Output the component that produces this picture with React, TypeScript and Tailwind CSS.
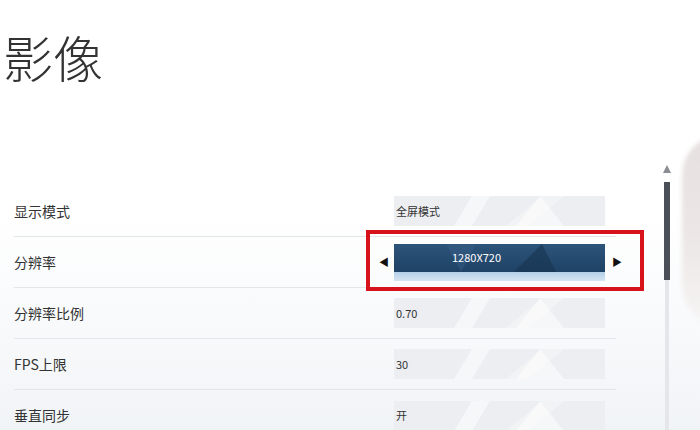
const rows = [
  { label: "显示模式", value: "全屏模式" },
  { label: "分辨率", value: "1280X720", active: true },
  { label: "分辨率比例", value: "0.70" },
  { label: "FPS上限", value: "30" },
  { label: "垂直同步", value: "开" },
];

const BoxPattern = () => (
  <svg className="absolute inset-0 h-full w-full" viewBox="0 0 211 30" preserveAspectRatio="none">
    <polygon points="60,30 78,0 96,0 78,30" fill="#ffffff" opacity="0.5" />
    <polygon points="112,30 148,0 170,0 134,30" fill="#ffffff" opacity="0.3" />
    <polygon points="122,30 146,0 170,30" fill="#ffffff" opacity="0.5" />
  </svg>
);

const ActivePattern = () => (
  <svg className="absolute inset-0 h-full w-full" viewBox="0 0 211 28" preserveAspectRatio="none">
    <polygon points="52,0 82,0 67,28" fill="#3a6089" opacity="0.45" />
    <polygon points="120,28 148,0 162,28" fill="#17344f" opacity="0.6" />
  </svg>
);

const App = () => {
  return (
    <div className="relative w-[700px] h-[430px] overflow-hidden bg-gradient-to-b from-white via-white to-[#f1f4f7] font-['Noto_Sans_CJK_SC',sans-serif] text-[#333]">
      {/* blurred figure on the right */}
      <div className="absolute right-[-22px] top-[135px] w-[40px] h-[190px] rounded-l-full bg-gradient-to-b from-[#e6e0e0] via-[#ece6e6] to-[#f6f4f4] blur-[2px]" />

      {/* title */}
      <div className="h-[165px] pl-[3px] pt-[25px]">
        <h1 className="text-[50px] leading-[62px] font-light text-[#333]">影像</h1>
      </div>

      <div className="flex items-start">
        {/* settings list */}
        <div className="ml-[14px] mt-[21px] w-[602px]">
          {rows.map((r, i) => (
            <div
              key={r.label}
              className={`relative flex items-center h-[51px] ${i < rows.length - 1 ? "border-b border-[#e3e5e8]" : ""}`}
            >
              <div className="w-[380px] text-[14px] text-[#333]">{r.label}</div>
              {r.active ? (
                <div className="relative flex items-center">
                  <div className="absolute left-[-28px] top-[-14px] w-[278px] h-[61px] border-[4px] border-[#d8121b]" />
                  <span className="absolute left-[-15px] text-[10px] leading-none text-[#111]">◀</span>
                  <div className="w-[211px]">
                    <div className="relative h-[28px] bg-gradient-to-b from-[#2d5479] to-[#1f4266] flex items-center">
                      <ActivePattern />
                      <span className="relative pl-[58px] text-[11px] text-white">{r.value}</span>
                    </div>
                    <div className="h-[9px] bg-gradient-to-b from-[#b4d0e8] to-[#d6e5f3]" />
                  </div>
                  <span className="absolute left-[218px] text-[10px] leading-none text-[#111]">▶</span>
                </div>
              ) : (
                <div className="relative w-[211px] h-[30px] bg-[#eceef1] flex items-center">
                  <BoxPattern />
                  <span className="relative pl-[2px] text-[11px] text-[#333]">{r.value}</span>
                </div>
              )}
            </div>
          ))}
        </div>

        {/* scrollbar */}
        <div className="ml-[47px] flex flex-col items-center w-[8px]">
          <div className="w-0 h-0 border-l-[4px] border-r-[4px] border-b-[8px] border-l-transparent border-r-transparent border-b-[#8a8d92]" />
          <div className="mt-[9px] w-[6px] h-[98px] bg-[#4b5058]" />
          <div className="w-[4px] h-[160px] bg-[#e4e6e9]" />
        </div>
      </div>
    </div>
  );
};

export default App;
